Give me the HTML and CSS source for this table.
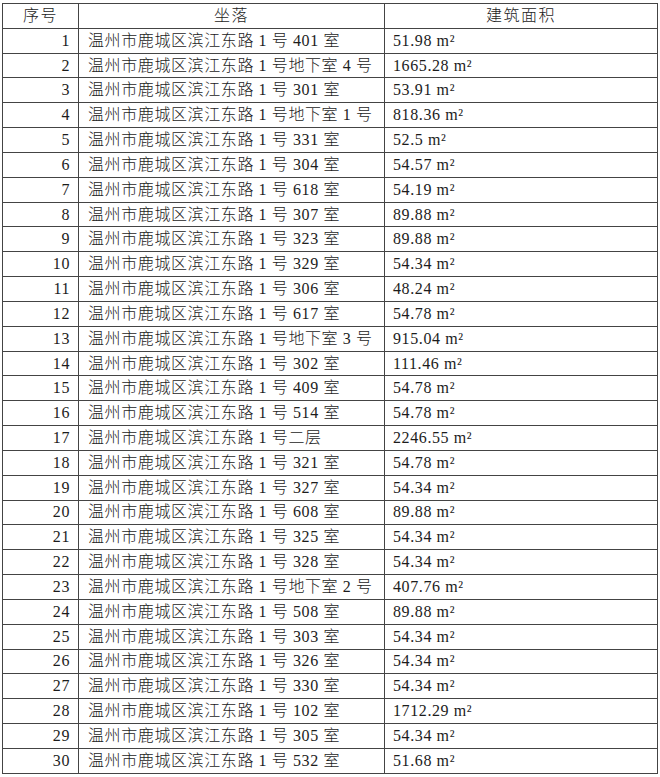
FILE: index.html
```html
<!DOCTYPE html>
<html lang="zh">
<head>
<meta charset="utf-8">
<link rel="stylesheet" href="styles.css">
</head>
<body>
<table class="sheet">
<colgroup><col class="c-no"><col class="c-addr"><col class="c-area"></colgroup>
<thead>
<tr><th>序号</th><th>坐落</th><th>建筑面积</th></tr>
</thead>
<tbody>
<tr><td class="no">1</td><td class="addr">温州市鹿城区滨江东路 1 号 401 室</td><td class="area">51.98 m²</td></tr>
<tr><td class="no">2</td><td class="addr">温州市鹿城区滨江东路 1 号地下室 4 号</td><td class="area">1665.28 m²</td></tr>
<tr><td class="no">3</td><td class="addr">温州市鹿城区滨江东路 1 号 301 室</td><td class="area">53.91 m²</td></tr>
<tr><td class="no">4</td><td class="addr">温州市鹿城区滨江东路 1 号地下室 1 号</td><td class="area">818.36 m²</td></tr>
<tr><td class="no">5</td><td class="addr">温州市鹿城区滨江东路 1 号 331 室</td><td class="area">52.5 m²</td></tr>
<tr><td class="no">6</td><td class="addr">温州市鹿城区滨江东路 1 号 304 室</td><td class="area">54.57 m²</td></tr>
<tr><td class="no">7</td><td class="addr">温州市鹿城区滨江东路 1 号 618 室</td><td class="area">54.19 m²</td></tr>
<tr><td class="no">8</td><td class="addr">温州市鹿城区滨江东路 1 号 307 室</td><td class="area">89.88 m²</td></tr>
<tr><td class="no">9</td><td class="addr">温州市鹿城区滨江东路 1 号 323 室</td><td class="area">89.88 m²</td></tr>
<tr><td class="no">10</td><td class="addr">温州市鹿城区滨江东路 1 号 329 室</td><td class="area">54.34 m²</td></tr>
<tr><td class="no">11</td><td class="addr">温州市鹿城区滨江东路 1 号 306 室</td><td class="area">48.24 m²</td></tr>
<tr><td class="no">12</td><td class="addr">温州市鹿城区滨江东路 1 号 617 室</td><td class="area">54.78 m²</td></tr>
<tr><td class="no">13</td><td class="addr">温州市鹿城区滨江东路 1 号地下室 3 号</td><td class="area">915.04 m²</td></tr>
<tr><td class="no">14</td><td class="addr">温州市鹿城区滨江东路 1 号 302 室</td><td class="area">111.46 m²</td></tr>
<tr><td class="no">15</td><td class="addr">温州市鹿城区滨江东路 1 号 409 室</td><td class="area">54.78 m²</td></tr>
<tr><td class="no">16</td><td class="addr">温州市鹿城区滨江东路 1 号 514 室</td><td class="area">54.78 m²</td></tr>
<tr><td class="no">17</td><td class="addr">温州市鹿城区滨江东路 1 号二层</td><td class="area">2246.55 m²</td></tr>
<tr><td class="no">18</td><td class="addr">温州市鹿城区滨江东路 1 号 321 室</td><td class="area">54.78 m²</td></tr>
<tr><td class="no">19</td><td class="addr">温州市鹿城区滨江东路 1 号 327 室</td><td class="area">54.34 m²</td></tr>
<tr><td class="no">20</td><td class="addr">温州市鹿城区滨江东路 1 号 608 室</td><td class="area">89.88 m²</td></tr>
<tr><td class="no">21</td><td class="addr">温州市鹿城区滨江东路 1 号 325 室</td><td class="area">54.34 m²</td></tr>
<tr><td class="no">22</td><td class="addr">温州市鹿城区滨江东路 1 号 328 室</td><td class="area">54.34 m²</td></tr>
<tr><td class="no">23</td><td class="addr">温州市鹿城区滨江东路 1 号地下室 2 号</td><td class="area">407.76 m²</td></tr>
<tr><td class="no">24</td><td class="addr">温州市鹿城区滨江东路 1 号 508 室</td><td class="area">89.88 m²</td></tr>
<tr><td class="no">25</td><td class="addr">温州市鹿城区滨江东路 1 号 303 室</td><td class="area">54.34 m²</td></tr>
<tr><td class="no">26</td><td class="addr">温州市鹿城区滨江东路 1 号 326 室</td><td class="area">54.34 m²</td></tr>
<tr><td class="no">27</td><td class="addr">温州市鹿城区滨江东路 1 号 330 室</td><td class="area">54.34 m²</td></tr>
<tr><td class="no">28</td><td class="addr">温州市鹿城区滨江东路 1 号 102 室</td><td class="area">1712.29 m²</td></tr>
<tr><td class="no">29</td><td class="addr">温州市鹿城区滨江东路 1 号 305 室</td><td class="area">54.34 m²</td></tr>
<tr><td class="no">30</td><td class="addr">温州市鹿城区滨江东路 1 号 532 室</td><td class="area">51.68 m²</td></tr>
</tbody>
</table>
</body>
</html>
```

FILE: styles.css
```css
html, body {
  margin: 0;
  padding: 0;
  background: #ffffff;
}

body {
  padding: 3px 0 0 2px;
}

.sheet {
  border-collapse: collapse;
  table-layout: fixed;
  width: 655px;
  font-family: "Liberation Serif", "Noto Sans CJK SC", serif;
  font-size: 16px;
  font-weight: 300;
  color: #1c1c1c;
  letter-spacing: 0.6px;
}

.c-no { width: 76px; }
.c-addr { width: 306px; }
.c-area { width: 273px; }

.sheet th,
.sheet td {
  border: 1px solid #444444;
  height: 24.84px;
  padding: 0;
  line-height: 20px;
  white-space: nowrap;
  overflow: hidden;
  box-sizing: border-box;
}

.sheet th {
  font-weight: 300;
  text-align: center;
  letter-spacing: 1.5px;
}

.sheet td.no {
  text-align: right;
  padding-right: 8px;
}

.sheet td.addr {
  text-align: left;
  padding-left: 9px;
}

.sheet td.area {
  text-align: left;
  padding-left: 8px;
}
```
